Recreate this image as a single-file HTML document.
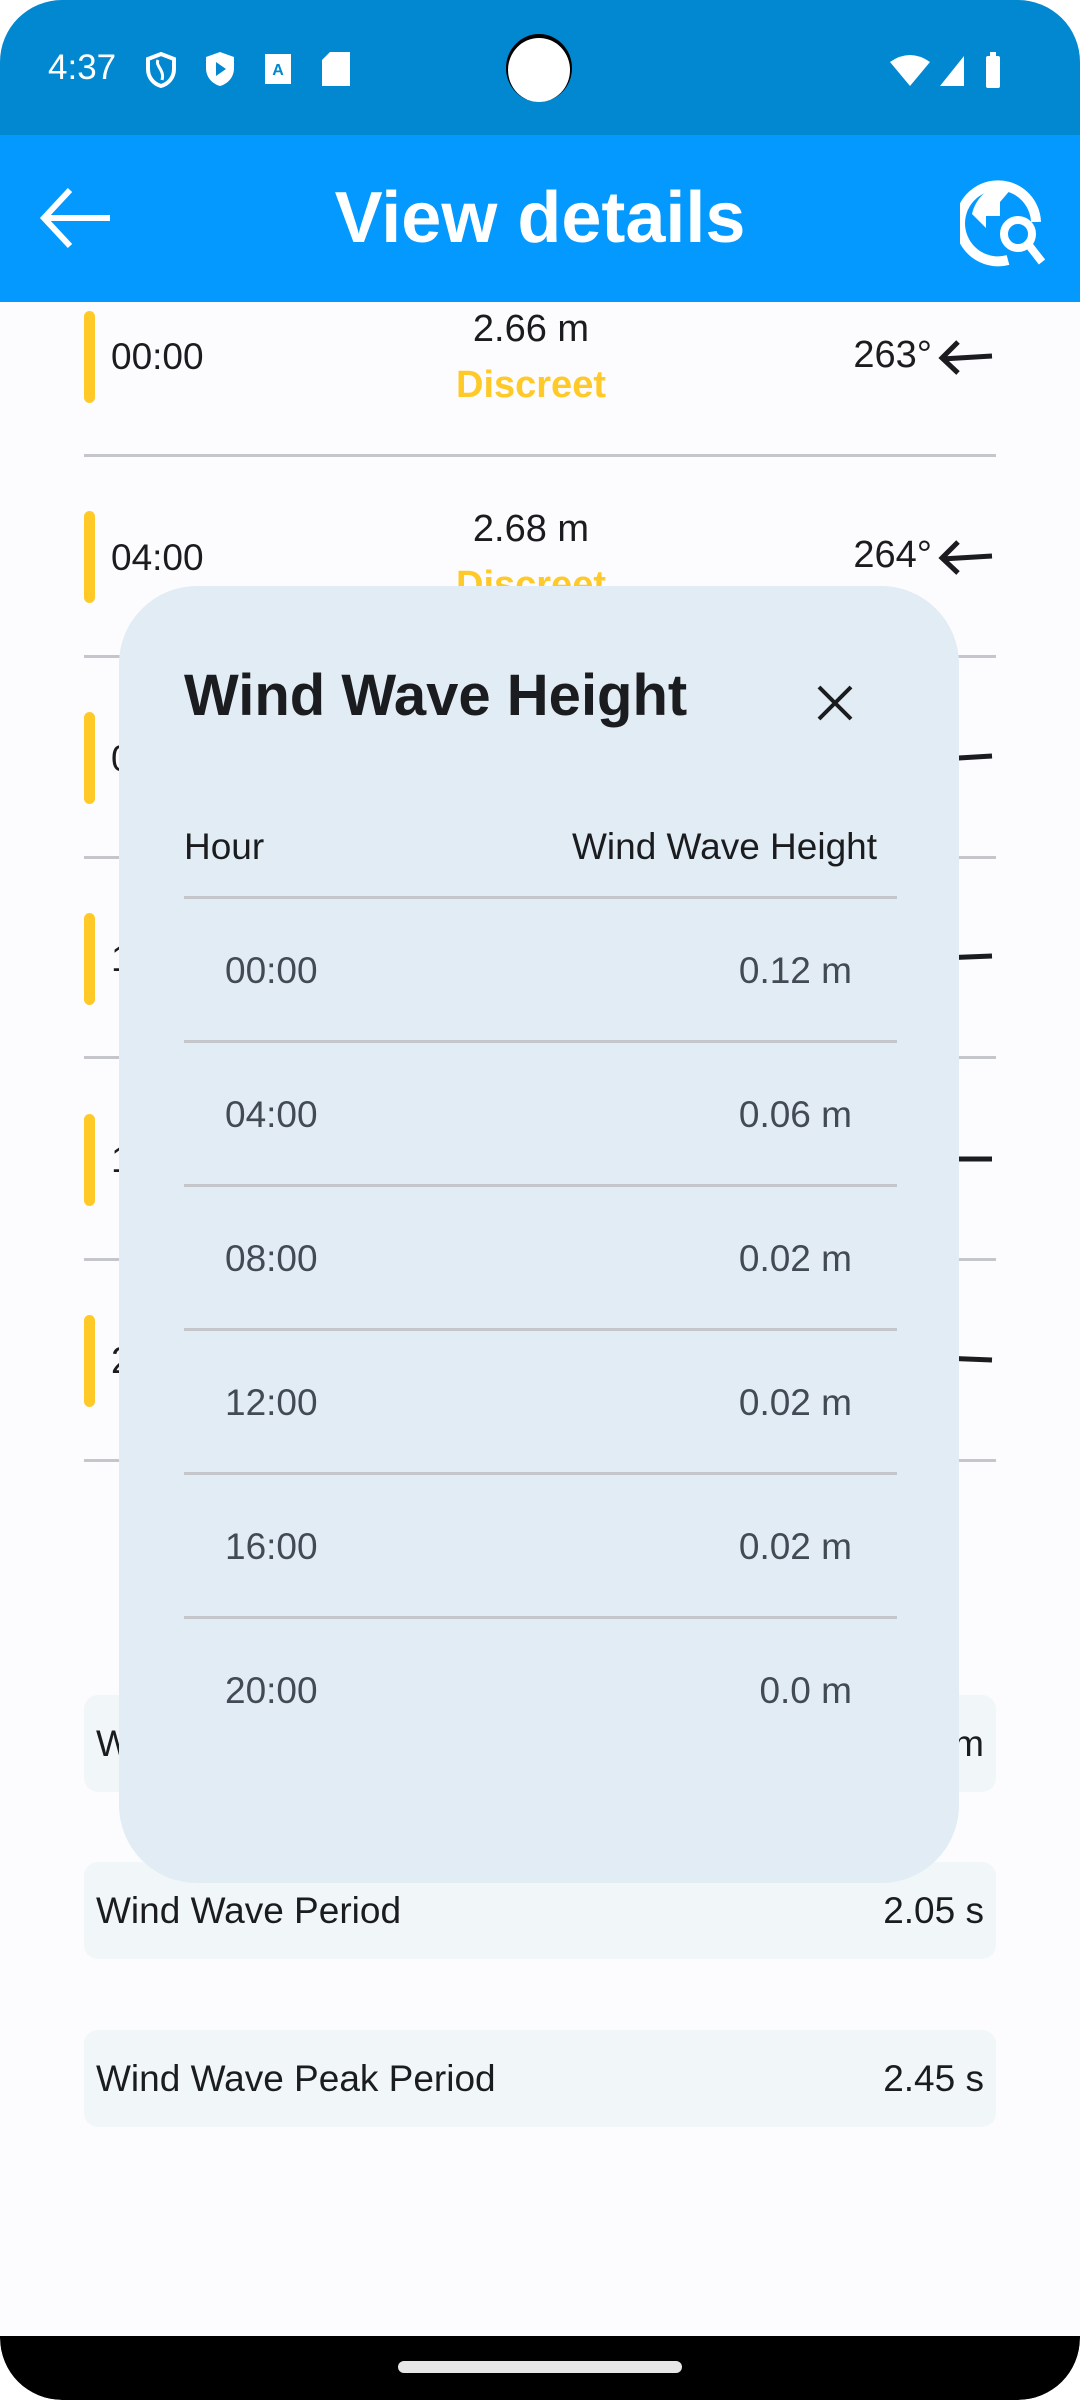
<!DOCTYPE html>
<html><head><meta charset="utf-8">
<style>
*{margin:0;padding:0;box-sizing:border-box}
body{width:1080px;height:2400px;background:#fff;font-family:"Liberation Sans",sans-serif;overflow:hidden;position:relative}
.screen{position:absolute;left:0;top:0;width:1080px;height:2400px;background:#FCFCFE;border-radius:62px 62px 62px 62px;overflow:hidden}
.abs{position:absolute}
.status{left:0;top:0;width:1080px;height:135px;background:#0288D1}
.appbar{left:0;top:135px;width:1080px;height:167px;background:#0399FE}
.row-time{font-size:37px;color:#1b1c1f;font-weight:500}
.bar{width:11px;height:92px;background:#FFCA28;border-radius:6px;left:84px}
.div{left:84px;width:912px;height:3px;background:#C4C6CC}
.card{left:84px;width:912px;height:97px;background:#F1F6F8;border-radius:14px;font-size:37px;color:#1b1c1f}
.card span{position:absolute;top:28px}
.dlg{left:119px;top:586px;width:840px;height:1297px;background:#E1ECF4;border-radius:78px}
.drow{font-size:37px;color:#434A55;font-weight:500}
.ddiv{left:65px;width:713px;height:3px;background:#C4C6CC}
</style></head><body>
<div class="screen">
<div class="abs status"></div>
<div class="abs" style="left:48px;top:48px;font-size:35px;color:#fff">4:37</div>
<svg class="abs" style="left:145px;top:52px" width="32" height="36" viewBox="0 0 32 36"><path d="M16 2 L29 7 V17 C29 26 23 32 16 34 C9 32 3 26 3 17 V7 Z" fill="none" stroke="#fff" stroke-width="4"/><path d="M13 8 C10 14 20 18 17 28" fill="none" stroke="#fff" stroke-width="3"/></svg>
<svg class="abs" style="left:204px;top:50px" width="32" height="38" viewBox="0 0 32 38"><path d="M16 2 L30 7 V18 C30 28 23 34 16 36 C9 34 2 28 2 18 V7 Z" fill="#fff"/><path d="M12 12 L22 19 L12 26Z" fill="#0288D1"/></svg>
<svg class="abs" style="left:265px;top:54px" width="26" height="30"><rect width="26" height="30" fill="#fff"/><text x="13" y="21" font-size="16" text-anchor="middle" fill="#0288D1" font-family="Liberation Sans" font-weight="bold">A</text></svg>
<svg class="abs" style="left:322px;top:52px" width="28" height="34"><path d="M8 0 H28 V34 H0 V8 Z" fill="#fff"/></svg>
<div class="abs" style="left:506px;top:34px;width:66px;height:68px;border-radius:50%;background:#000"></div>
<div class="abs" style="left:508px;top:38px;width:62px;height:64px;border-radius:50%;background:#fff"></div>
<svg class="abs" style="left:890px;top:52px" width="120" height="36" viewBox="0 0 120 36"><path d="M0 10 Q20 -4 40 10 L20 34 Z" fill="#fff"/><path d="M50 34 L74 4 V34Z" fill="#fff"/><rect x="96" y="4" width="14" height="32" rx="2" fill="#fff"/><rect x="100" y="0" width="6" height="6" fill="#fff"/></svg>

<div class="abs appbar"></div>
<svg class="abs" style="left:38px;top:186px" width="74" height="64" viewBox="0 0 74 64"><path d="M72 32 H6 M32 4 L6 32 L32 60" fill="none" stroke="#fff" stroke-width="6"/></svg>
<div class="abs" style="left:0;width:1080px;top:177px;text-align:center;font-size:72px;font-weight:bold;color:#fff">View details</div>
<svg class="abs" style="left:960px;top:174px" width="96" height="96" viewBox="0 0 96 96"><path d="M76 48 A38 38 0 1 0 48 86" fill="none" stroke="#fff" stroke-width="10"/><path d="M48 10 A38 38 0 0 0 12 40 L26 54 V42 H40 V28 L52 14 Z" fill="#fff"/><circle cx="58" cy="60" r="14" fill="none" stroke="#fff" stroke-width="8"/><path d="M68 70 L82 88" stroke="#fff" stroke-width="8"/></svg>

<div class="abs bar" style="top:311px"></div>
<div class="abs row-time" style="left:111px;top:336px">00:00</div>
<div class="abs" style="left:0;width:1062px;text-align:center;top:308px;font-size:38px;color:#1b1c1f;font-weight:500">2.66 m</div>
<div class="abs" style="left:0;width:1062px;text-align:center;top:364px;font-size:38px;color:#FFCA28;font-weight:bold">Discreet</div>
<div class="abs" style="left:820px;width:112px;text-align:right;top:334px;font-size:38px;color:#1b1c1f">263°</div>
<svg class="abs" style="left:936px;top:336px" width="60" height="40"><path d="M56 20 L6 23 M22 6 L6 22 L22 37" fill="none" stroke="#1b1c1f" stroke-width="5"/></svg>
<div class="abs div" style="top:454px"></div>

<div class="abs bar" style="top:511px"></div>
<div class="abs row-time" style="left:111px;top:537px">04:00</div>
<div class="abs" style="left:0;width:1062px;text-align:center;top:508px;font-size:38px;color:#1b1c1f;font-weight:500">2.68 m</div>
<div class="abs" style="left:0;width:1062px;text-align:center;top:564px;font-size:38px;color:#FFCA28;font-weight:bold">Discreet</div>
<div class="abs" style="left:820px;width:112px;text-align:right;top:534px;font-size:38px;color:#1b1c1f">264°</div>
<svg class="abs" style="left:936px;top:536px" width="60" height="40"><path d="M56 20 L6 23 M22 6 L6 22 L22 37" fill="none" stroke="#1b1c1f" stroke-width="5"/></svg>
<div class="abs div" style="top:655px"></div>

<div class="abs bar" style="top:712px"></div><div class="abs row-time" style="left:111px;top:738px">08:00</div>
<svg class="abs" style="left:936px;top:738px" width="60" height="40"><path d="M56 18 L6 21" stroke="#1b1c1f" stroke-width="5"/></svg>
<div class="abs div" style="top:856px"></div>
<div class="abs bar" style="top:913px"></div><div class="abs row-time" style="left:111px;top:938px">12:00</div>
<svg class="abs" style="left:936px;top:938px" width="60" height="40"><path d="M56 18 L6 20" stroke="#1b1c1f" stroke-width="5"/></svg>
<div class="abs div" style="top:1056px"></div>
<div class="abs bar" style="top:1114px"></div><div class="abs row-time" style="left:111px;top:1139px">16:00</div>
<svg class="abs" style="left:936px;top:1140px" width="60" height="40"><path d="M56 19 L6 19" stroke="#1b1c1f" stroke-width="5"/></svg>
<div class="abs div" style="top:1258px"></div>
<div class="abs bar" style="top:1315px"></div><div class="abs row-time" style="left:111px;top:1340px">20:00</div>
<svg class="abs" style="left:936px;top:1340px" width="60" height="40"><path d="M56 20 L6 18" stroke="#1b1c1f" stroke-width="5"/></svg>
<div class="abs div" style="top:1459px"></div>

<div class="abs card" style="top:1695px"><span style="left:12px">Wind Wave Height</span><span style="right:12px">0.0 m</span></div>
<div class="abs card" style="top:1862px"><span style="left:12px">Wind Wave Period</span><span style="right:12px">2.05 s</span></div>
<div class="abs card" style="top:2030px"><span style="left:12px">Wind Wave Peak Period</span><span style="right:12px">2.45 s</span></div>

<div class="abs dlg">
 <div class="abs" style="left:65px;top:76px;font-size:58px;font-weight:bold;color:#1b1c1f">Wind Wave Height</div>
 <svg class="abs" style="left:697px;top:98px" width="38" height="38"><path d="M3 3 L35 35 M35 3 L3 35" stroke="#1b1c1f" stroke-width="4"/></svg>
 <div class="abs" style="left:65px;top:240px;font-size:37px;color:#1b1c1f">Hour</div>
 <div class="abs" style="right:82px;top:240px;font-size:37px;color:#1b1c1f">Wind Wave Height</div>
 <div class="abs ddiv" style="top:310px"></div>
 <div class="abs drow" style="left:106px;top:364px">00:00</div><div class="abs drow" style="right:107px;top:364px">0.12 m</div>
 <div class="abs ddiv" style="top:454px"></div>
 <div class="abs drow" style="left:106px;top:508px">04:00</div><div class="abs drow" style="right:107px;top:508px">0.06 m</div>
 <div class="abs ddiv" style="top:598px"></div>
 <div class="abs drow" style="left:106px;top:652px">08:00</div><div class="abs drow" style="right:107px;top:652px">0.02 m</div>
 <div class="abs ddiv" style="top:742px"></div>
 <div class="abs drow" style="left:106px;top:796px">12:00</div><div class="abs drow" style="right:107px;top:796px">0.02 m</div>
 <div class="abs ddiv" style="top:886px"></div>
 <div class="abs drow" style="left:106px;top:940px">16:00</div><div class="abs drow" style="right:107px;top:940px">0.02 m</div>
 <div class="abs ddiv" style="top:1030px"></div>
 <div class="abs drow" style="left:106px;top:1084px">20:00</div><div class="abs drow" style="right:107px;top:1084px">0.0 m</div>
</div>

<div class="abs" style="left:0;top:2336px;width:1080px;height:64px;background:#000;border-radius:0 0 62px 62px"></div>
<div class="abs" style="left:398px;top:2361px;width:284px;height:12px;border-radius:6px;background:#E6E6E6"></div>
</div>
</body></html>
